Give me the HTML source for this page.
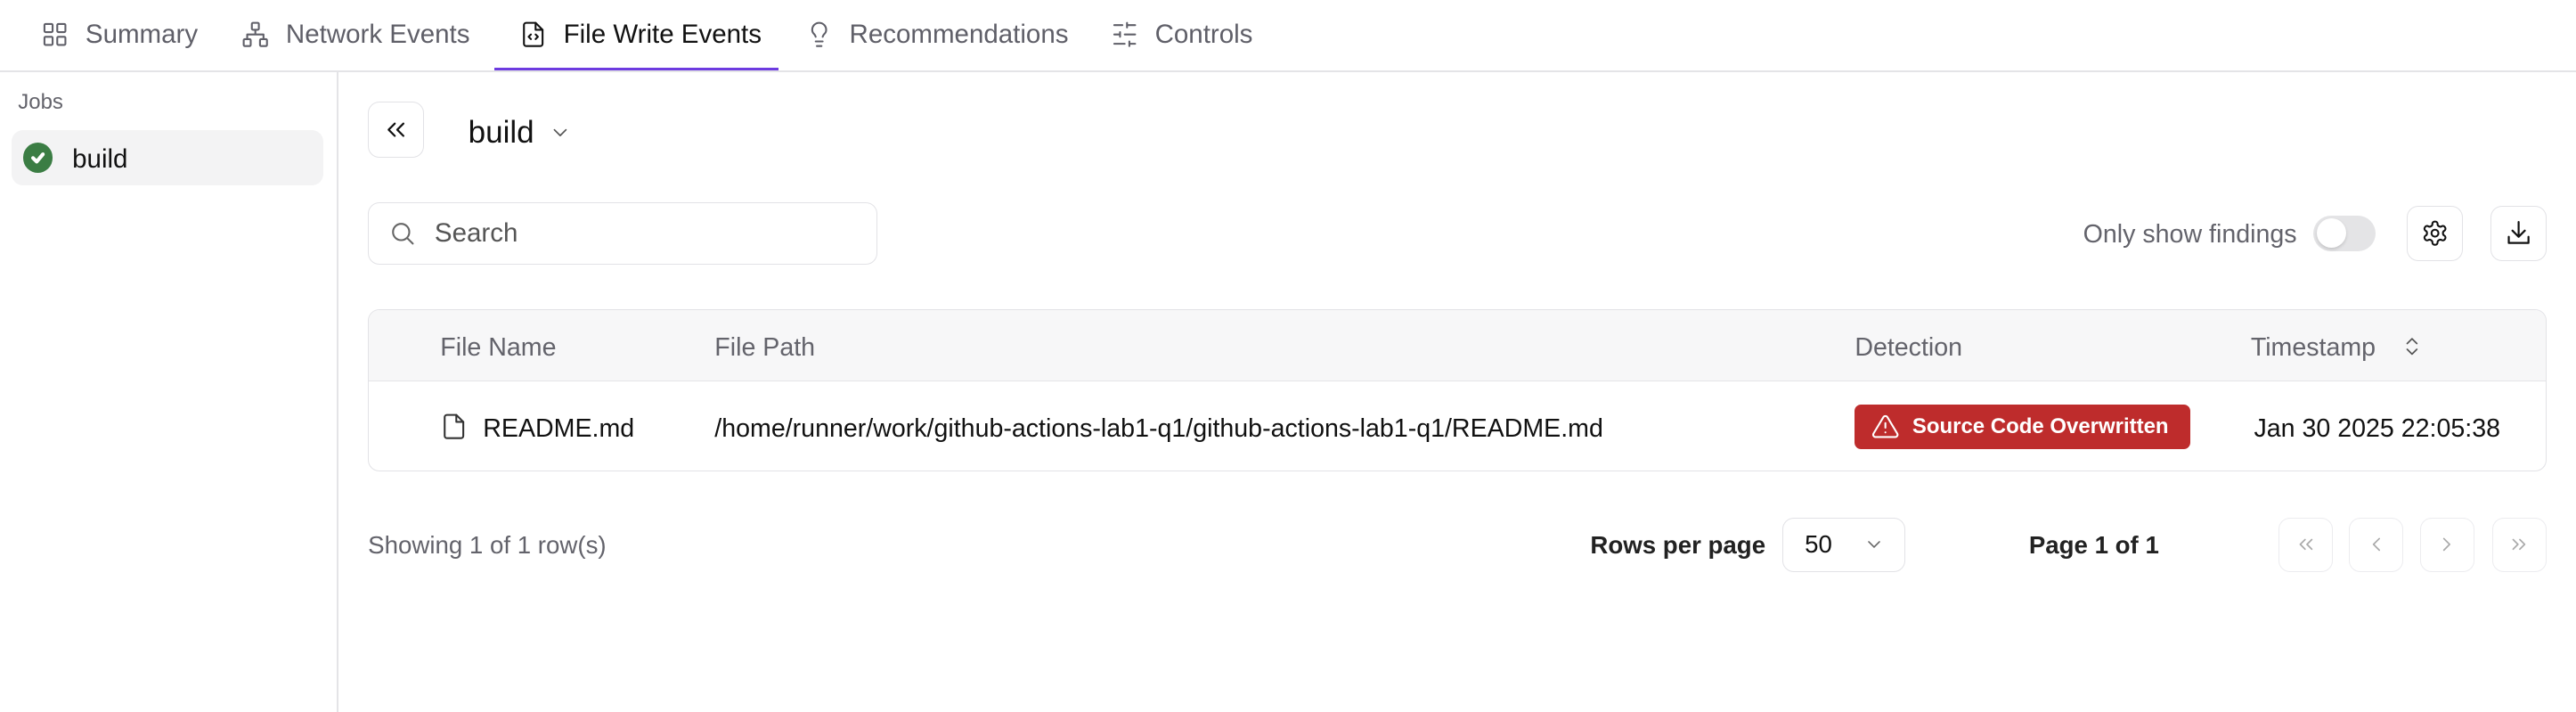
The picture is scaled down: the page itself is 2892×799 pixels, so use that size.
<!DOCTYPE html>
<html><head><meta charset="utf-8"><style>
html,body{margin:0;padding:0;background:#fff;overflow:hidden}
#w{width:1568px;height:433px;position:relative;zoom:1.84439;font-family:"Liberation Sans",sans-serif;color:#111}
.a{position:absolute}
.tab{position:absolute;top:12px;font-size:16px;color:#5f5f68;display:flex;align-items:center;gap:10px;white-space:nowrap}
.tab svg{width:17px;height:17px}
.btn{position:absolute;border:1px solid #e2e2e6;border-radius:7px;box-sizing:border-box;display:flex;align-items:center;justify-content:center;background:#fff}
.gray{color:#63636b}
svg{fill:none;stroke:currentColor;stroke-width:1.6;stroke-linecap:round;stroke-linejoin:round}
</style></head><body><div id="w">
<div class="tab" style="left:25px"><svg viewBox="0 0 24 24"><rect x="3" y="3" width="7" height="7" rx="1"/><rect x="14" y="3" width="7" height="7" rx="1"/><rect x="3" y="14" width="7" height="7" rx="1"/><rect x="14" y="14" width="7" height="7" rx="1"/></svg>Summary</div>
<div class="tab" style="left:147px"><svg viewBox="0 0 24 24"><rect x="9" y="2" width="6" height="6" rx="1"/><rect x="2" y="16" width="6" height="6" rx="1"/><rect x="16" y="16" width="6" height="6" rx="1"/><path d="M5 16v-4h14v4M12 8v4"/></svg>Network Events</div>
<div class="tab" style="left:316px;color:#111"><svg viewBox="0 0 24 24"><path d="M14 2H6a2 2 0 0 0-2 2v16a2 2 0 0 0 2 2h12a2 2 0 0 0 2-2V8z"/><path d="M14 2v6h6M10 12l-2 2 2 2M14 12l2 2-2 2"/></svg>File Write Events</div>
<div class="a" style="left:301px;top:41px;width:173px;height:2px;background:#6d3be0"></div>
<div class="tab" style="left:490px"><svg viewBox="0 0 24 24"><path d="M15 14c.2-1 .7-1.7 1.5-2.5A4.6 4.6 0 0 0 18 8 6 6 0 0 0 6 8c0 1 .2 2.2 1.5 3.5.7.7 1.3 1.5 1.5 2.5M9 18h6M10 22h4"/></svg>Recommendations</div>
<div class="tab" style="left:676px"><svg viewBox="0 0 24 24"><path d="M21 4h-7M10 4H3M21 12h-9M8 12H3M21 20h-5M12 20H3M14 2v4M8 10v4M16 18v4"/></svg>Controls</div>
<div class="a" style="left:0;top:43px;width:1568px;height:1px;background:#e4e4e7"></div>
<div class="a" style="left:205px;top:44px;width:1px;height:389px;background:#e4e4e7"></div>
<div class="a gray" style="left:11px;top:55px;font-size:13px">Jobs</div>
<div class="a" style="left:7px;top:79px;width:190px;height:34px;background:#f3f3f4;border-radius:7px"></div>
<div class="a" style="left:14px;top:87px;width:18px;height:18px;border-radius:50%;background:#3b7d44;color:#fff"><svg viewBox="0 0 24 24" style="width:18px;height:18px;stroke-width:3"><path d="M8 12.5l3 3 5-6"/></svg></div>
<div class="a" style="left:44px;top:88px;font-size:16px">build</div>
<div class="btn" style="left:224px;top:62px;width:34px;height:34px"><svg viewBox="0 0 24 24" style="width:18px;height:18px"><path d="M11 17l-5-5 5-5M18 17l-5-5 5-5"/></svg></div>
<div class="a" style="left:285px;top:70px;font-size:19px">build</div>
<svg class="a" viewBox="0 0 24 24" style="left:334px;top:74px;width:14px;height:14px;color:#555"><path d="M6 9l6 6 6-6"/></svg>
<div class="btn" style="left:224px;top:123px;width:310px;height:38px;justify-content:flex-start;padding-left:12px"><svg viewBox="0 0 24 24" style="width:17px;height:17px;color:#666"><circle cx="11" cy="11" r="7"/><path d="M21 21l-4.3-4.3"/></svg><span style="margin-left:11px;font-size:16px;color:#555">Search</span></div>
<div class="a gray" style="left:1268px;top:134px;font-size:15.5px">Only show findings</div>
<div class="a" style="left:1408px;top:131px;width:38px;height:22px;border-radius:11px;background:#e4e4e6"><div class="a" style="left:2px;top:2px;width:18px;height:18px;border-radius:50%;background:#fff;box-shadow:0 1px 2px rgba(0,0,0,.15)"></div></div>
<div class="btn" style="left:1465px;top:125px;width:34px;height:34px"><svg viewBox="0 0 24 24" style="width:17px;height:17px"><path d="M12.22 2h-.44a2 2 0 0 0-2 2v.18a2 2 0 0 1-1 1.73l-.43.25a2 2 0 0 1-2 0l-.15-.08a2 2 0 0 0-2.73.73l-.22.38a2 2 0 0 0 .73 2.73l.15.1a2 2 0 0 1 1 1.720v.51a2 2 0 0 1-1 1.740l-.15.09a2 2 0 0 0-.73 2.73l.22.38a2 2 0 0 0 2.73.73l.15-.08a2 2 0 0 1 2 0l.43.25a2 2 0 0 1 1 1.73V20a2 2 0 0 0 2 2h.44a2 2 0 0 0 2-2v-.18a2 2 0 0 1 1-1.73l.43-.25a2 2 0 0 1 2 0l.15.08a2 2 0 0 0 2.73-.73l.22-.39a2 2 0 0 0-.73-2.73l-.15-.08a2 2 0 0 1-1-1.74v-.5a2 2 0 0 1 1-1.74l.15-.09a2 2 0 0 0 .73-2.73l-.22-.38a2 2 0 0 0-2.73-.73l-.15.08a2 2 0 0 1-2 0l-.43-.25a2 2 0 0 1-1-1.73V4a2 2 0 0 0-2-2z"/><circle cx="12" cy="12" r="3"/></svg></div>
<div class="btn" style="left:1516px;top:125px;width:34px;height:34px"><svg viewBox="0 0 24 24" style="width:18px;height:18px"><path d="M12 3v12M7 10l5 5 5-5M4 15v5h16v-5"/></svg></div>
<div class="a" style="left:224px;top:188px;width:1326px;height:99px;border:1px solid #e2e2e6;border-radius:7px;box-sizing:border-box;overflow:hidden">
<div style="height:43px;background:#f7f7f8;border-bottom:1px solid #e4e4e7"></div></div>
<div class="a gray" style="left:268px;top:203px;font-size:15.5px">File Name</div>
<div class="a gray" style="left:435px;top:203px;font-size:15.5px">File Path</div>
<div class="a gray" style="left:1129px;top:203px;font-size:15.5px">Detection</div>
<div class="a gray" style="left:1370px;top:203px;font-size:15.5px">Timestamp</div>
<svg class="a" viewBox="0 0 24 24" style="left:1461px;top:203px;width:14px;height:16px;color:#555"><path d="M7 9l5-5 5 5M7 15l5 5 5-5"/></svg>
<svg class="a" viewBox="0 0 24 24" style="left:268px;top:251px;width:17px;height:17px;color:#333"><path d="M14 2H6a2 2 0 0 0-2 2v16a2 2 0 0 0 2 2h12a2 2 0 0 0 2-2V8z"/><path d="M14 2v6h6"/></svg>
<div class="a" style="left:294px;top:252px;font-size:15.5px">README.md</div>
<div class="a" style="left:435px;top:252px;font-size:15.5px">/home/runner/work/github-actions-lab1-q1/github-actions-lab1-q1/README.md</div>
<div class="a" style="left:1129px;top:246px;width:204px;height:27px;background:#be2c2c;border-radius:4px;color:#fff;display:flex;align-items:center;font-size:13px;font-weight:bold;white-space:nowrap"><svg viewBox="0 0 24 24" style="width:17px;height:17px;margin:0 8px 0 10px"><path d="M10.3 3.9L1.8 18a2 2 0 0 0 1.7 3h17a2 2 0 0 0 1.7-3L13.7 3.9a2 2 0 0 0-3.4 0zM12 9v4M12 17h.01"/></svg>Source Code Overwritten</div>
<div class="a" style="left:1372px;top:252px;font-size:15.5px">Jan 30 2025 22:05:38</div>
<div class="a gray" style="left:224px;top:323px;font-size:15px">Showing 1 of 1 row(s)</div>
<div class="a" style="left:968px;top:323px;font-size:15px;font-weight:bold;color:#222">Rows per page</div>
<div class="btn" style="left:1085px;top:315px;width:75px;height:33px;justify-content:flex-start;padding-left:13px;font-size:15px">50<svg viewBox="0 0 24 24" style="width:13px;height:13px;margin-left:19px;color:#666"><path d="M6 9l6 6 6-6"/></svg></div>
<div class="a" style="left:1235px;top:323px;font-size:15px;font-weight:bold;color:#222">Page 1 of 1</div>
<div class="btn" style="left:1387px;top:315px;width:33px;height:33px;color:#aaa;border-color:#ececef"><svg viewBox="0 0 24 24" style="width:14px;height:14px"><path d="M11 17l-5-5 5-5M18 17l-5-5 5-5"/></svg></div>
<div class="btn" style="left:1430px;top:315px;width:33px;height:33px;color:#aaa;border-color:#ececef"><svg viewBox="0 0 24 24" style="width:14px;height:14px"><path d="M15 18l-6-6 6-6"/></svg></div>
<div class="btn" style="left:1473px;top:315px;width:33px;height:33px;color:#aaa;border-color:#ececef"><svg viewBox="0 0 24 24" style="width:14px;height:14px"><path d="M9 18l6-6-6-6"/></svg></div>
<div class="btn" style="left:1517px;top:315px;width:33px;height:33px;color:#aaa;border-color:#ececef"><svg viewBox="0 0 24 24" style="width:14px;height:14px"><path d="M13 17l5-5-5-5M6 17l5-5-5-5"/></svg></div>
</div></body></html>
